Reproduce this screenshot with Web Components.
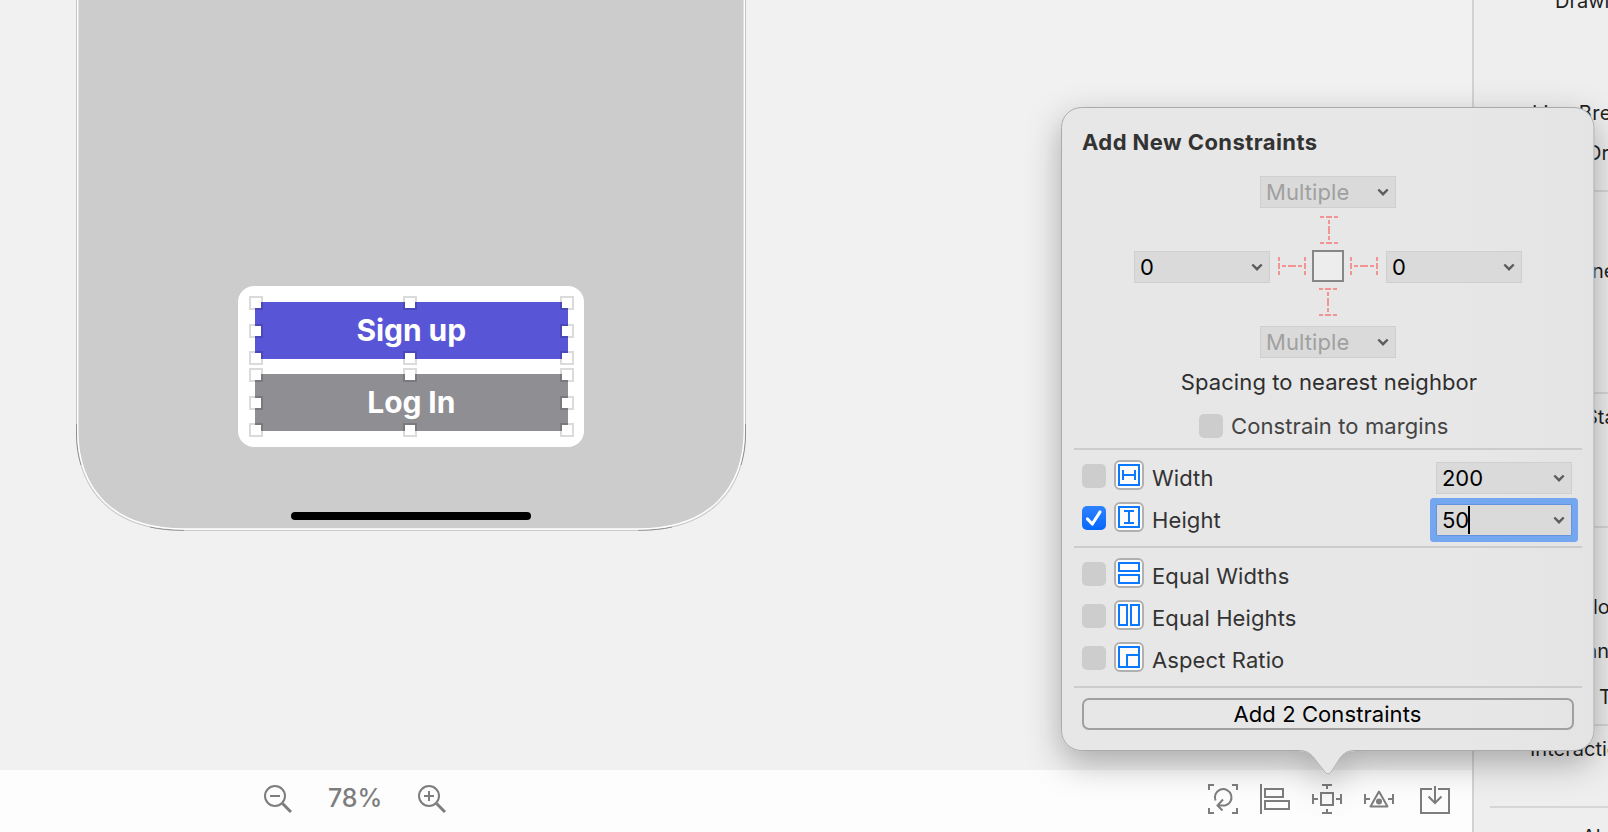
<!DOCTYPE html>
<html lang="en">
<head>
<meta charset="utf-8">
<title>Interface Builder</title>
<style>
html,body{margin:0;height:100%;overflow:hidden}
body{font-family:Inter,"Liberation Sans",sans-serif;background:#f1f1f1}
</style>
</head>
<body>
<ib-window></ib-window>
<script>
const define = (name, html, setup) => {
  const t = document.createElement('template');
  t.innerHTML = html;
  customElements.define(name, class extends HTMLElement {
    constructor() {
      super();
      this.attachShadow({mode: 'open'}).appendChild(t.content.cloneNode(true));
    }
    connectedCallback() { if (setup) setup(this, this.shadowRoot); }
  });
};

/* Canvas button with its eight selection handles */
define('canvas-button', `
<style>
:host{display:grid;place-items:center;position:relative;height:57px;color:#fff;font-weight:700;font-size:30px;line-height:36px;background:var(--fill)}
.t{letter-spacing:-.1px;position:relative;top:-1px}
i{position:absolute;width:10px;height:10px;background:#fff;border:2px solid rgba(0,0,0,.14);background-clip:padding-box}
i.l{left:-6px}i.c{left:148px}i.r{right:-6px}
i.a{top:-6px}i.m{top:22px}i.b{bottom:-6px}
</style>
<span class="t"><slot></slot></span>
<i class="l a"></i><i class="c a"></i><i class="r a"></i><i class="l m"></i><i class="r m"></i><i class="l b"></i><i class="c b"></i><i class="r b"></i>`);

define('device-preview', `
<style>
:host{display:flex;flex-direction:column;align-items:center;box-sizing:border-box;position:relative;width:670px;height:531px;padding:286px 0 0 0;margin-left:76px}
svg{position:absolute;left:0;top:0}
.card{position:relative;box-sizing:border-box;width:346px;height:161px;background:#fff;border-radius:16px;padding:16px 16px 0 16.500px;display:flex;flex-direction:column;gap:15px}
.home{position:relative;width:240px;height:8px;border-radius:4px;background:#000;margin-top:65px}
</style>
<svg width="670" height="531" viewBox="0 0 670 531" fill="none">
<path d="M1 -5V430C1 490 36 529.500 108 529.500H562C634 529.500 669 490 669 430V-5Z" fill="#ccc"/>
<path d="M.5 -5V430C.5 491 36 530.300 108 530.300H562C634 530.300 669.500 491 669.500 430V-5" stroke="#c4c4c4"/>
<path d="M.5 424V436C.7 446 2 455 5 465M669.500 424V436C669.300 446 668 455 665 465M74 527Q88 530.300 108 530.300M596 527Q582 530.300 562 530.300" stroke="#8a8a8a" stroke-width=".9"/>
<path d="M1.700 -5V430C1.700 489 37 529 108 529H562C633 529 668.300 489 668.300 430V-5" stroke="#fff" stroke-width="1.400"/>
</svg>
<div class="card">
<canvas-button style="--fill:#5856d6">Sign up</canvas-button>
<canvas-button style="--fill:#8e8e93">Log In</canvas-button>
</div>
<div class="home"></div>`);

define('canvas-toolbar', `
<style>
:host{display:flex;align-items:center;box-sizing:border-box;height:62px;padding:0 22px 0 262px;background:#fdfdfd;color:#7d7d7d;font-size:25px;font-weight:500}
svg{display:block;fill:none;stroke:#7d7d7d;stroke-width:2}
.pct{width:54px;margin:0 34px 0 36px;line-height:32px;letter-spacing:-.1px;white-space:nowrap;position:relative;top:-3px}
.glass{position:relative;top:-3.500px}
.tools{display:flex;margin-left:auto;gap:22px;position:relative;top:-2px}
.tools svg:last-child{margin-left:4px}
</style>
<svg class="glass" width="30" height="30" viewBox="0 0 30 30"><circle cx="13" cy="13" r="10"/><path d="M8 13h10"/><path d="M20.500 20.500l8.500 8.500" stroke-width="3"/></svg>
<span class="pct">78%</span>
<svg class="glass" width="30" height="30" viewBox="0 0 30 30"><circle cx="13" cy="13" r="10"/><path d="M8 13h10M13 8v10"/><path d="M20.500 20.500l8.500 8.500" stroke-width="3"/></svg>
<div class="tools">
<svg width="30" height="30" viewBox="0 0 30 30"><path d="M1 6V1H6M24 1h5v5M29 24v5h-5M6 29H1v-5"/><path d="M7.500 16.500A8.300 8.300 0 1 1 17 21.500L9.500 21.500M15 15.500l-5.500 6 5 5"/></svg>
<svg width="30" height="30" viewBox="0 0 30 30"><path d="M1 0v30M5 5h18v8H5zM5 17h24v8H5z"/></svg>
<svg width="30" height="30" viewBox="0 0 30 30"><path d="M9 9h12v12H9zM10 1h10M15 1v4M10 29h10M15 25v4M1 10v10M1 15h5M29 10v10M24 15h5"/></svg>
<svg width="30" height="30" viewBox="0 0 30 30"><path d="M15 7.500L23.500 22.500H6.500Z" stroke-linejoin="round"/><circle cx="15" cy="17.500" r="3" fill="#7d7d7d" stroke="none"/><path d="M1 10v10M1 15h5M29 10v10M24 15h5"/></svg>
<svg width="30" height="30" viewBox="0 0 30 30"><path d="M12 5H1V29H29V5H18M15 2V19M8.500 12.500L15 19l6.500-6.500"/></svg>
</div>`);

define('inspector-label', `
<style>:host{display:block;height:24px;line-height:24px;font-size:20px;white-space:nowrap;color:#1f1f1f;flex:none}</style><slot></slot>`);

define('inspector-panel', `
<style>
:host{display:flex;flex-direction:column;box-sizing:border-box;width:136px;height:832px;background:#eee;border-left:2px solid #d2d2d2;overflow:hidden}
hr{flex:none;height:2px;border:0;margin:0 0 0 16px;background:#d6d6d6}
</style>
<inspector-label style="margin:-11px 0 0 81px">Drawing</inspector-label>
<inspector-label style="margin:88px 0 0 58px;letter-spacing:.3px">Line Break</inspector-label>
<inspector-label style="margin:16px 0 0 113px">Dr</inspector-label>
<hr style="margin-top:25px">
<inspector-label style="margin:67px 0 0 118px">ne</inspector-label>
<hr style="margin-top:109px">
<inspector-label style="margin:11px 0 0 111px">Sta</inspector-label>
<hr style="margin-top:97px">
<inspector-label style="margin:67px 0 0 119px">lo</inspector-label>
<inspector-label style="margin:20px 0 0 112px">an</inspector-label>
<inspector-label style="margin:22px 0 0 125px">T</inspector-label>
<hr style="margin-top:15px">
<inspector-label style="margin:11px 0 0 56px">Interaction</inspector-label>
<hr style="margin-top:45px">
<inspector-label style="margin:17px 0 0 108px">Alpha</inspector-label>`);

define('check-box', `
<style>
:host{display:block;width:24px;height:24px;border-radius:5px;background:#cdcdcd;flex:none}
:host([checked]){background:linear-gradient(#2f82ff,#0568fb)}
svg{display:none}:host([checked]) svg{display:block}
</style>
<svg width="24" height="24" viewBox="0 0 24 24"><path d="M5.500 13L10.300 18 18 6" fill="none" stroke="#fff" stroke-width="3.200" stroke-linecap="round" stroke-linejoin="round"/></svg>`);

define('combo-field', `
<style>
:host{display:flex;align-items:center;box-sizing:border-box;width:136px;height:32px;padding:0 6px 0 5px;border:1px solid #cfcfcf;background:#dadada;color:#000;font-size:22px;line-height:28px;flex:none}
:host([disabled]){color:#a0a0a0}
:host([focused]){border-color:#6395df;box-shadow:0 0 0 6px #75a7f0;border-radius:1px}
.v{letter-spacing:-.05px}
:host([disabled]) .v{letter-spacing:.08px}
.caret{display:none;width:2px;height:28px;background:#000;margin-left:-1px}
:host([focused]) .caret{display:block}
svg{margin-left:auto}
</style>
<span class="v"><slot></slot></span><span class="caret"></span>
<svg width="12" height="8" viewBox="0 0 12 8"><path d="M1.300 1.500L6 6.200 10.700 1.500" fill="none" stroke="#5c5c5c" stroke-width="2.400"/></svg>`);

/* Dashed strut: drawn vertical, turned for the horizontal sides */
define('strut-line', `
<style>:host{display:block;width:28px;height:28px}:host([horizontal]) svg{transform:rotate(90deg)}svg{display:block}</style>
<svg width="28" height="28" viewBox="0 0 28 28" fill="none" stroke="#f29494" stroke-width="2"><path d="M5 1h4M11 1h6M19 1h4M5 27h4M11 27h6M19 27h4M14 4v4M14 10v8M14 20v4"/></svg>`);

const glyphs = {
  width: 'M5 5h20v20H5zM9 10v10M21 10v10M9 15h12',
  height: 'M5 5h20v20H5zM10 9h10M10 21h10M15 9v12',
  rows: 'M5 5h20v8H5zM5 17h20v8H5z',
  columns: 'M5 5h8v20H5zM17 5h8v20h-8z',
  ratio: 'M5 5h20v20H5zM13 25V13h12'
};
define('constraint-row', `
<style>
:host{display:flex;align-items:center;height:42px;padding:0 22px 0 20px;font-size:22px;color:#333}
check-box{margin:0 8px 4px 0}
.icon{display:block;margin:0 8px 6px 0}
.t{flex:1;letter-spacing:.1px}
</style>
<check-box></check-box>
<svg class="icon" width="30" height="30" viewBox="0 0 30 30"><rect x="1" y="1" width="28" height="28" rx="5" fill="#fdfcfa" stroke="#b0b0b0" stroke-width="2"/><path fill="none" stroke="#0a78ff" stroke-width="2"/></svg>
<span class="t"><slot></slot></span><slot name="field"></slot>`,
(el, root) => {
  root.querySelector('path').setAttribute('d', glyphs[el.getAttribute('icon')]);
  if (el.hasAttribute('checked')) root.querySelector('check-box').setAttribute('checked', '');
});

define('constraints-popover', `
<style>
:host{display:flex;flex-direction:column;box-sizing:border-box;width:532px;height:643px;padding-top:21px;font-size:22px;color:#333}
.bg{position:absolute;left:-80px;top:-80px;z-index:-1}
h2{margin:0 0 20px 20px;height:28px;line-height:28px;font-size:22px;font-weight:700;letter-spacing:.42px}
.grid{display:grid;grid-template-columns:136px 42px 32px 42px 136px;grid-template-rows:32px 43px 32px 43px 32px;place-items:center;margin-left:72px}
.wide{grid-column:1/6}
.sq{box-sizing:border-box;width:32px;height:32px;border:2px solid #868886;background:#ededed;margin-top:-2px}
.hint{text-align:center;height:28px;line-height:28px;margin:10px 0 0 2px;letter-spacing:.1px;color:#2e2e2e}
.margins{display:flex;align-items:center;gap:8px;height:28px;margin:16px 0 0 137px;color:#444;letter-spacing:.1px}
hr{box-sizing:border-box;width:508px;height:2px;border:0;margin:5px 0 7px 12px;background:#ccc;flex:none}
button{box-sizing:border-box;width:492px;height:32px;margin:3px 0 0 20px;border:2px solid #a0a0a0;border-radius:7px;background:transparent;font:22px/28px Inter,sans-serif;letter-spacing:.08px;color:#000;padding:0 1px 0 0}
</style>
<svg class="bg" width="700" height="830" viewBox="-80 -80 700 830">
<defs><filter id="s" x="-20%" y="-20%" width="140%" height="140%"><feDropShadow dx="0" dy="12" stdDeviation="17" flood-color="#000" flood-opacity=".3"/></filter>
<linearGradient id="g"><stop offset=".75" stop-color="#e7e7e7"/><stop offset="1" stop-color="#e4e4e4"/></linearGradient></defs>
<path d="M20 .5H512A20 20 0 0 1 532 20.500V623.500A20 20 0 0 1 512 643.500H293C286 643.500 282 646 278 651L269.500 664.500Q266 669.500 262.500 664.500L252 651C248 646 244 643.500 237 643.500H19.500A20 20 0 0 1 -.5 623.500V20.500A20 20 0 0 1 19.500 .5Z" fill="url(#g)" stroke="#ababab" filter="url(#s)"/>
</svg>
<h2>Add New Constraints</h2>
<div class="grid">
<combo-field class="wide" disabled>Multiple</combo-field>
<strut-line class="wide" style="margin:1px 0 0 2px"></strut-line>
<combo-field>0</combo-field><strut-line horizontal style="margin:-2px 0 0 2px"></strut-line><div class="sq"></div><strut-line horizontal style="margin:-2px 2px 0 0"></strut-line><combo-field>0</combo-field>
<strut-line class="wide" style="margin:-5px 0 0 0"></strut-line>
<combo-field class="wide" disabled>Multiple</combo-field>
</div>
<div class="hint">Spacing to nearest neighbor</div>
<div class="margins"><check-box></check-box><span>Constrain to margins</span></div>
<hr style="margin-top:8px">
<constraint-row icon="width">Width<combo-field slot="field">200</combo-field></constraint-row>
<constraint-row icon="height" checked>Height<combo-field slot="field" focused>50</combo-field></constraint-row>
<hr>
<constraint-row icon="rows">Equal Widths</constraint-row>
<constraint-row icon="columns">Equal Heights</constraint-row>
<constraint-row icon="ratio">Aspect Ratio</constraint-row>
<hr>
<button>Add 2 Constraints</button>`);

define('ib-window', `
<style>
:host{display:grid;grid-template-columns:1472px 136px;position:relative;width:1608px;height:832px;overflow:hidden}
.main{display:flex;flex-direction:column;height:832px}
.canvas{height:770px;background:#f1f1f1}
constraints-popover{position:absolute;left:1062px;top:107px;z-index:1}
</style>
<div class="main"><div class="canvas"><device-preview></device-preview></div><canvas-toolbar></canvas-toolbar></div>
<inspector-panel></inspector-panel>
<constraints-popover></constraints-popover>`);
</script>
</body>
</html>
